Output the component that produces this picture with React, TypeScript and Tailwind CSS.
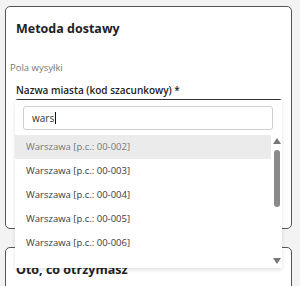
import React from "react";

const rows = ["00-002", "00-003", "00-004", "00-005", "00-006"];

export default function App() {
  return (
    <div
      className="relative w-[300px] h-[286px] overflow-hidden bg-[#f3f3f3] pt-[6px] pl-[5px]"
      style={{ fontFamily: '"Open Sans", "Liberation Sans", sans-serif' }}
    >
      <div className="relative w-[287px] h-[223px] rounded-[5px] border border-[#555] bg-white">
        <div className="ml-[10px] mt-[13px] text-[12.5px] leading-[18px] font-bold text-[#222]">
          Metoda dostawy
        </div>
        <div className="ml-[4px] mt-[23px] text-[9.5px] leading-[14px] text-[#777]">
          Pola wysyłki
        </div>
        <div className="ml-[10px] mt-[8px] text-[10px] leading-[14px] font-semibold text-[#222]">
          Nazwa miasta (kod szacunkowy) *
        </div>
        <div className="relative ml-[9px] mt-[2px] w-[267px] h-[30px] rounded-t-[3px] border-t border-[#333]">
          <div className="absolute left-0 top-0 z-10 flex h-[168px] w-[267px] flex-col bg-white shadow-[0_2px_4px_rgba(0,0,0,0.12)]">
            <div className="px-[8px] pt-[6px] pr-[9px]">
              <div className="flex h-[24px] items-center rounded-[3px] border border-[#cfcfcf] pl-[8px] text-[10px] text-[#333]">
                <span>wars</span>
                <span className="ml-[1px] inline-block h-[12px] w-[1px] bg-[#111]" />
              </div>
            </div>
            <div className="mt-[5px] flex h-[133px] overflow-hidden">
              <div className="flex w-[256px] flex-col">
                {rows.map((r, i) => (
                  <div
                    key={r}
                    className={
                      i === 0
                        ? "flex h-[24px] shrink-0 items-center bg-[#ebebeb] pl-[11px] text-[9.5px] text-[#777]"
                        : "flex h-[24px] shrink-0 items-center pl-[11px] text-[9.5px] text-[#3a3a3a]"
                    }
                  >
                    Warszawa [p.c.: {r}]
                  </div>
                ))}
              </div>
              <div className="relative flex w-[11px] flex-col items-center">
                <svg width="8" height="6" viewBox="0 0 8 6" className="mt-[3px]">
                  <polygon points="4,0 8,6 0,6" fill="#777" />
                </svg>
                <div className="mt-[6px] h-[57px] w-[6px] rounded-full bg-[#8a8a8a]" />
                <svg width="8" height="6" viewBox="0 0 8 6" className="absolute bottom-[4px]">
                  <polygon points="0,0 8,0 4,6" fill="#777" />
                </svg>
              </div>
            </div>
          </div>
        </div>
      </div>
      <div className="mt-[18px] w-[287px] h-[60px] rounded-[5px] border border-[#555] bg-white">
        <div className="ml-[10px] mt-[13px] text-[12.5px] leading-[18px] font-bold text-[#222]">
          Oto, co otrzymasz
        </div>
      </div>
    </div>
  );
}
